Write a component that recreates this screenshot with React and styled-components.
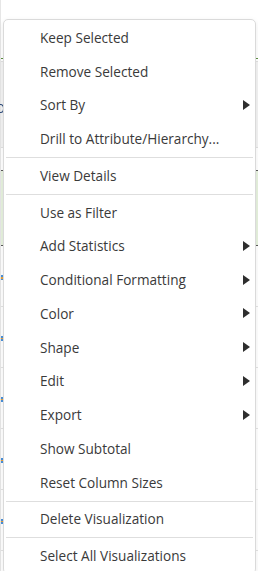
import React from 'react'
import styled, { createGlobalStyle } from 'styled-components'

const GlobalStyle = createGlobalStyle`
    html, body {
        margin: 0;
        padding: 0;
        background: #fff;
    }
    body {
        font-family: "Open Sans", "Noto Sans", sans-serif;
    }
`

const Page = styled.div`
    position: relative;
    width: 258px;
    height: 571px;
    overflow: hidden;
    background: #fff;
`

// the table visualization lying behind the menu
const Table = styled.div`
    display: flex;
    flex-direction: column;
    width: 100%;
    border-left: 1px solid #e6e6e6;
`
const Band = styled.div`
    position: relative;
    height: ${p => p.$h}px;
    background: ${p => p.$bg || '#fff'};
    border-bottom: 1px solid ${p => p.$line || 'transparent'};
    box-sizing: border-box;
`
const CellMark = styled.span`
    position: absolute;
    left: 0;
    top: ${p => p.$top}px;
    width: 2px;
    height: 5px;
    background: linear-gradient(#4a90d9 0 40%, #e8a33b 40% 70%, #4a90d9 70%);
`
// edge of a header glyph peeking out from under the menu
const HeaderGlyph = styled.span`
    position: absolute;
    left: -4px;
    top: 42px;
    width: 5px;
    height: 7px;
    border: 1.3px solid #2b4a7a;
    border-radius: 50%;
`

const Menu = styled.div`
    position: absolute;
    left: 3px;
    top: 19px;
    width: 253px;
    box-sizing: border-box;
    padding-top: 1px;
    background: #fff;
    border: 1px solid #dadada;
    border-radius: 5px;
    box-shadow: 0 2px 6px rgba(0, 0, 0, 0.08);
`
const Item = styled.div`
    display: flex;
    align-items: center;
    height: 33.75px;
    padding: 0 5px 1px 36px;
    box-sizing: border-box;
    font-size: 13.6px;
    color: #3a3a3a;
    white-space: nowrap;
`
const Arrow = styled.span`
    margin-left: auto;
    width: 0;
    height: 0;
    border-left: 7px solid #2e2e2e;
    border-top: 5.5px solid transparent;
    border-bottom: 5.5px solid transparent;
`
const Separator = styled.div`
    height: 1px;
    margin: 1px 2px;
    background: #dedede;
`

const entries = [
    { label: 'Keep Selected' },
    { label: 'Remove Selected' },
    { label: 'Sort By', sub: true },
    { label: 'Drill to Attribute/Hierarchy...' },
    { sep: true },
    { label: 'View Details' },
    { sep: true },
    { label: 'Use as Filter' },
    { label: 'Add Statistics', sub: true },
    { label: 'Conditional Formatting', sub: true },
    { label: 'Color', sub: true },
    { label: 'Shape', sub: true },
    { label: 'Edit', sub: true },
    { label: 'Export', sub: true },
    { label: 'Show Subtotal' },
    { label: 'Reset Column Sizes' },
    { sep: true },
    { label: 'Delete Visualization' },
    { sep: true },
    { label: 'Select All Visualizations' },
]

const dataRows = [
    { h: 61, line: '#e3e3e3', mark: 29 },
    { h: 61, line: '#e3e3e3', mark: 29 },
    { h: 61, line: '#e3e3e3', mark: 29 },
    { h: 61, line: '#e3e3e3', mark: 29 },
    { h: 61, line: '#e3e3e3', mark: 29 },
    { h: 20, line: '#5b8f3f' },
]

const App = () => {
    return (
        <Page>
            <GlobalStyle />
            <Table>
                <Band $h={59} $line="#5b8f3f" />
                <Band $h={3} $line="#e0e0e0" />
                <Band $h={86} $bg="#f3f3f3" $line="#e0e0e0">
                    <HeaderGlyph />
                </Band>
                <Band $h={23} $line="#5a5a5a" />
                <Band $h={75} $bg="#e7f2de" $line="#5a5a5a" />
                <Band $h={61} $line="#e3e3e3">
                    <CellMark $top={29} />
                </Band>
                {dataRows.map((r, i) => (
                    <Band key={i} $h={r.h} $line={r.line}>
                        {r.mark && <CellMark $top={r.mark} />}
                    </Band>
                ))}
            </Table>
            <Menu>
                {entries.map((e, i) =>
                    e.sep ? (
                        <Separator key={i} />
                    ) : (
                        <Item key={i}>
                            {e.label}
                            {e.sub && <Arrow />}
                        </Item>
                    )
                )}
            </Menu>
        </Page>
    )
}

export default App
